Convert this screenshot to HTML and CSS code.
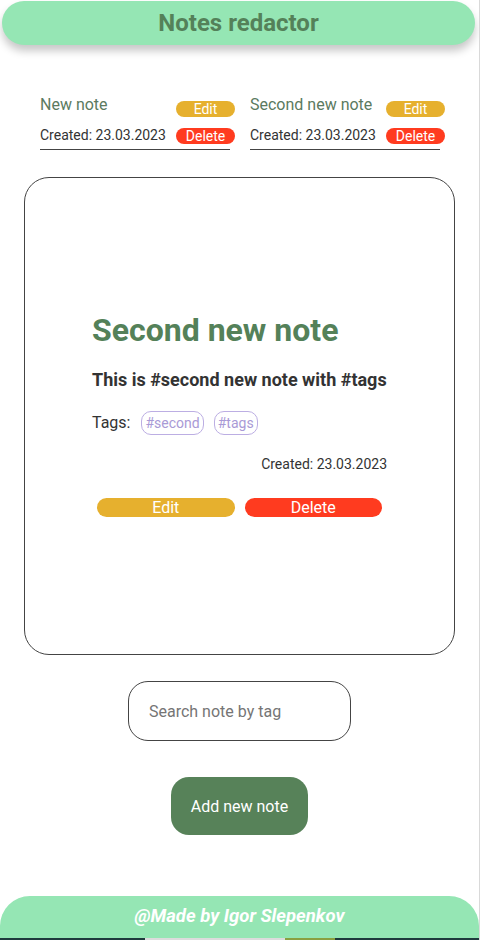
FILE: index.html
```html
<!DOCTYPE html>
<html lang="en">
<head>
<meta charset="utf-8">
<title>Notes redactor</title>
<link rel="stylesheet" href="styles.css">
</head>
<body>
<div class="page">
  <header class="header">Notes redactor</header>

  <section class="list">
    <div class="item">
      <div class="row row-top">
        <span class="item-title">New note</span>
        <button class="btn-sm btn-edit">Edit</button>
      </div>
      <div class="row row-bottom">
        <span class="item-date">Created: 23.03.2023</span>
        <button class="btn-sm btn-delete">Delete</button>
      </div>
      <div class="item-line"></div>
    </div>
    <div class="item">
      <div class="row row-top">
        <span class="item-title">Second new note</span>
        <button class="btn-sm btn-edit">Edit</button>
      </div>
      <div class="row row-bottom">
        <span class="item-date">Created: 23.03.2023</span>
        <button class="btn-sm btn-delete">Delete</button>
      </div>
      <div class="item-line"></div>
    </div>
  </section>

  <section class="card">
    <div class="card-content">
      <h1 class="card-title">Second new note</h1>
      <p class="card-text">This is #second new note with #tags</p>
      <div class="tags">
        <span class="tags-label">Tags:</span>
        <span class="tag">#second</span>
        <span class="tag">#tags</span>
      </div>
      <div class="card-date">Created: 23.03.2023</div>
      <div class="card-buttons">
        <button class="btn-lg btn-edit">Edit</button>
        <button class="btn-lg btn-delete">Delete</button>
      </div>
    </div>
  </section>

  <div class="search-wrap">
    <input class="search" type="text" placeholder="Search note by tag">
  </div>

  <div class="add-wrap">
    <button class="add">Add new note</button>
  </div>

  <footer class="footer">@Made by Igor Slepenkov</footer>
  <div class="bottom-strip"></div>
</div>
</body>
</html>
```

FILE: styles.css
```css
* { box-sizing: border-box; }

html, body {
  margin: 0;
  padding: 0;
  background: #fff;
}

body {
  font-family: Roboto, "Liberation Sans", sans-serif;
  color: #333;
}

.page {
  width: 480px;
  height: 940px;
  border-right: 1px solid #d9d9d9;
  display: flex;
  flex-direction: column;
  overflow: hidden;
}

.header {
  margin: 1px 4px 0 2px;
  height: 44px;
  border-radius: 22px;
  background: #95e6b4;
  color: #548159;
  font-weight: 700;
  font-size: 24px;
  line-height: 44px;
  text-align: center;
  box-shadow: 0 6px 8px rgba(0, 0, 0, 0.22);
}

.list {
  display: flex;
  gap: 15px;
  padding: 51px 0 0 40px;
}

.item {
  width: 195px;
}

.row {
  display: flex;
  justify-content: space-between;
  align-items: flex-start;
}

.row-bottom {
  margin-top: 10px;
}

.item-title {
  font-size: 16px;
  line-height: 18px;
  color: #5b7a60;
}

.item-date {
  font-size: 14px;
  line-height: 16px;
  color: #333;
}

.btn-sm {
  width: 59px;
  height: 16px;
  border: none;
  border-radius: 8px;
  padding: 0;
  color: #fff;
  font-family: Roboto, "Liberation Sans", sans-serif;
  font-size: 14px;
  line-height: 16px;
}

.row-top .btn-sm { margin-top: 5px; }
.row-bottom .btn-sm { margin-top: 1px; }

.btn-edit { background: #e6b02e; }
.btn-delete { background: #ff3b1f; }

.item-line {
  width: 190px;
  margin-top: 5px;
  border-top: 1px solid #444;
}

.card {
  margin: 27px 0 0 24px;
  width: 431px;
  height: 479px;
  border: 1px solid #444;
  border-radius: 25px;
  display: flex;
  align-items: center;
  justify-content: center;
}

.card-content {
  display: flex;
  flex-direction: column;
  width: 295px;
  margin-top: -4px;
}

.card-title {
  margin: 0;
  font-size: 32px;
  line-height: 36px;
  font-weight: 700;
  color: #548159;
  white-space: nowrap;
}

.card-text {
  margin: 22px 0 0;
  font-size: 18px;
  line-height: 20px;
  font-weight: 700;
  color: #333;
  white-space: nowrap;
}

.tags {
  margin-top: 21px;
  display: flex;
  align-items: center;
  gap: 10px;
}

.tags-label {
  font-size: 16px;
  margin-right: 1px;
}

.tag {
  height: 24px;
  padding: 0 3px;
  border: 1px solid #bcaee3;
  border-radius: 10px;
  color: #a99ad6;
  font-size: 14px;
  line-height: 22px;
}

.card-date {
  margin-top: 21px;
  text-align: right;
  font-size: 14px;
  line-height: 16px;
}

.card-buttons {
  margin-top: 26px;
  display: flex;
  gap: 10px;
  padding: 0 5px;
}

.btn-lg {
  flex: 1;
  height: 19px;
  border: none;
  border-radius: 10px;
  padding: 0;
  color: #fff;
  font-family: Roboto, "Liberation Sans", sans-serif;
  font-size: 16px;
  line-height: 19px;
}

.search-wrap {
  margin-top: 26px;
  display: flex;
  justify-content: center;
}

.search {
  width: 223px;
  height: 60px;
  border: 1px solid #444;
  border-radius: 20px;
  padding: 0 0 0 20px;
  font-family: Roboto, "Liberation Sans", sans-serif;
  font-size: 16px;
  color: #333;
  outline: none;
}

.search::placeholder {
  color: #757575;
}

.add-wrap {
  margin-top: 36px;
  display: flex;
  justify-content: center;
}

.add {
  width: 137px;
  height: 58px;
  border: none;
  border-radius: 18px;
  background: #578259;
  color: #fff;
  font-family: Roboto, "Liberation Sans", sans-serif;
  font-size: 16px;
}

.footer {
  margin-top: 61px;
  height: 42px;
  border-radius: 30px 30px 0 0;
  background: #95e6b4;
  color: #fff;
  font-style: italic;
  font-weight: 700;
  font-size: 18.5px;
  line-height: 40px;
  text-align: center;
}

.bottom-strip {
  height: 2px;
  background: linear-gradient(to right, #1f3a3d 0 145px, #dcdcdc 145px 285px, #8aa040 285px 335px, #1f3a3d 335px);
}
```
